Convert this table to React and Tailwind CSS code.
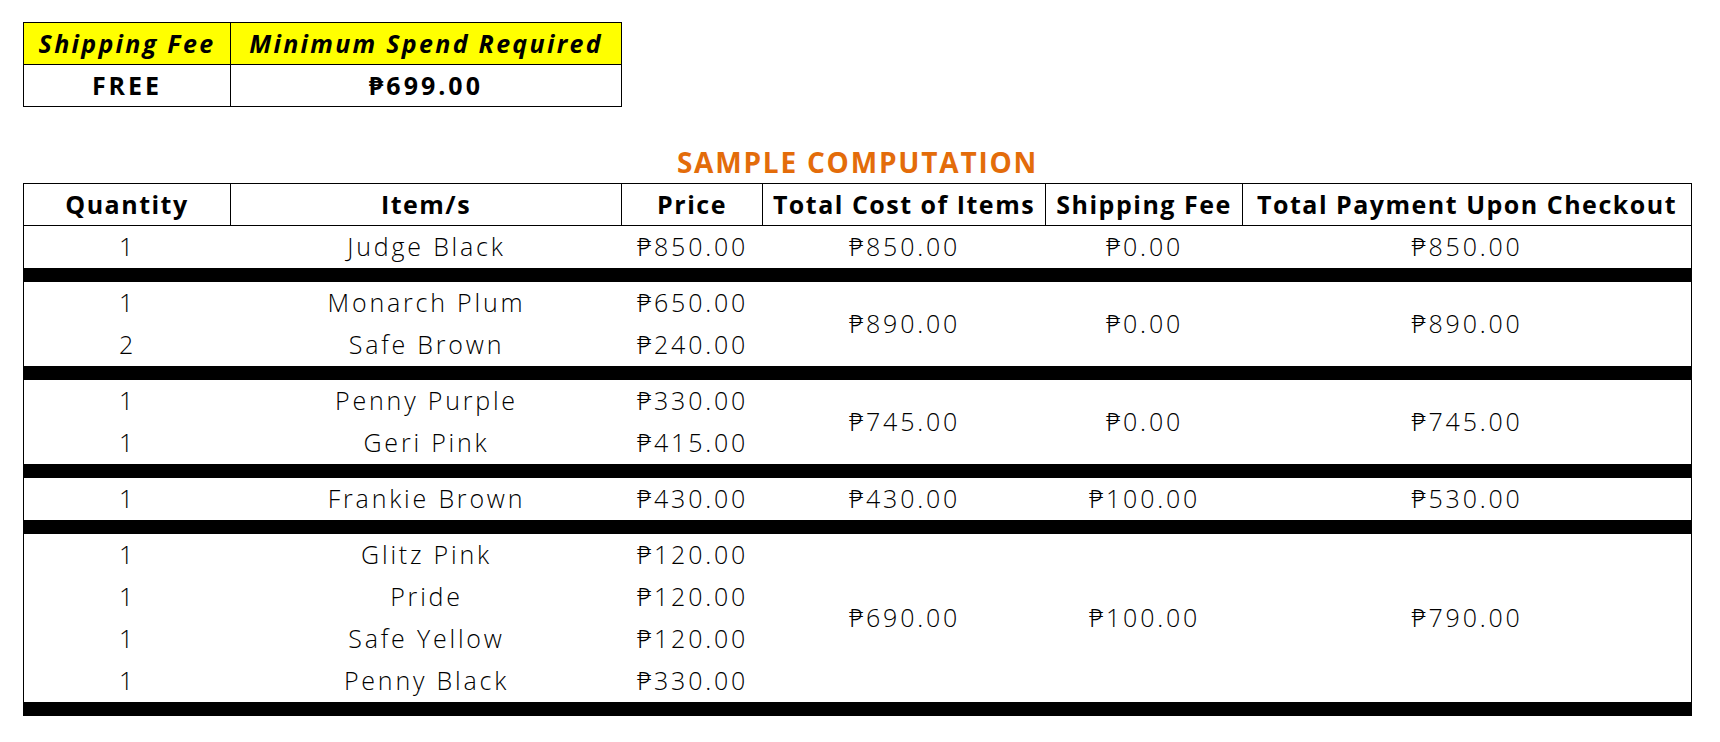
import React from "react";

const groups = [
  { items: [["1", "Judge Black", "₱850.00"]], total: "₱850.00", fee: "₱0.00", pay: "₱850.00" },
  {
    items: [
      ["1", "Monarch Plum", "₱650.00"],
      ["2", "Safe Brown", "₱240.00"],
    ],
    total: "₱890.00",
    fee: "₱0.00",
    pay: "₱890.00",
  },
  {
    items: [
      ["1", "Penny Purple", "₱330.00"],
      ["1", "Geri Pink", "₱415.00"],
    ],
    total: "₱745.00",
    fee: "₱0.00",
    pay: "₱745.00",
  },
  { items: [["1", "Frankie Brown", "₱430.00"]], total: "₱430.00", fee: "₱100.00", pay: "₱530.00" },
  {
    items: [
      ["1", "Glitz Pink", "₱120.00"],
      ["1", "Pride", "₱120.00"],
      ["1", "Safe Yellow", "₱120.00"],
      ["1", "Penny Black", "₱330.00"],
    ],
    total: "₱690.00",
    fee: "₱100.00",
    pay: "₱790.00",
  },
];

const cols = "grid grid-cols-[207px_391px_141px_283px_197px_448px]";
const heads = ["Quantity", "Item/s", "Price", "Total Cost of Items", "Shipping Fee", "Total Payment Upon Checkout"];

export default function App() {
  return (
    <div className="min-h-screen bg-white text-black pl-[23px] pt-[22px] font-['Open_Sans','Noto_Sans','DejaVu_Sans',sans-serif]">
      {/* free shipping box */}
      <div className="w-[599px] border border-black">
        <div className="grid grid-cols-[207px_1fr] bg-[#ffff00] h-[42px] border-b border-black text-[25px] font-bold italic leading-none tracking-[2.3px]">
          <div className="flex items-center justify-center border-r border-black">Shipping Fee</div>
          <div className="flex items-center justify-center">Minimum Spend Required</div>
        </div>
        <div className="grid grid-cols-[207px_1fr] h-[41px] text-[25px] font-bold leading-none tracking-[3px]">
          <div className="flex items-center justify-center border-r border-black">FREE</div>
          <div className="flex items-center justify-center">₱699.00</div>
        </div>
      </div>

      {/* sample computation */}
      <div className="w-[1669px] mt-[38px]">
        <h2 className="h-[38px] flex items-center justify-center pb-[4px] text-[28px] font-bold leading-none tracking-[1.8px] text-[#e36c0a]">
          SAMPLE COMPUTATION
        </h2>
        <div className="border-x border-black">
          <div className={`${cols} h-[43px] border-y border-black text-[25px] font-bold leading-none tracking-[1.5px]`}>
            {heads.map((h, i) => (
              <div
                key={h}
                className={`flex items-center justify-center pb-[1px] ${i < heads.length - 1 ? "border-r border-black" : ""}`}
              >
                {h}
              </div>
            ))}
          </div>

          {groups.map((g, gi) => (
            <div key={gi}>
              <div className={`${cols} text-[25px] font-light leading-none tracking-[2.8px]`}>
                {g.items.map((it, ri) => (
                  <React.Fragment key={ri}>
                    <div className="h-[42px] flex items-center justify-center pb-[2px]">{it[0]}</div>
                    <div className="h-[42px] flex items-center justify-center pb-[2px]">{it[1]}</div>
                    <div className="h-[42px] flex items-center justify-center pb-[2px]">{it[2]}</div>
                    {ri === 0 && (
                      <>
                        <div
                          className="flex items-center justify-center pb-[2px]"
                          style={{ gridRow: `span ${g.items.length}` }}
                        >
                          {g.total}
                        </div>
                        <div
                          className="flex items-center justify-center pb-[2px]"
                          style={{ gridRow: `span ${g.items.length}` }}
                        >
                          {g.fee}
                        </div>
                        <div
                          className="flex items-center justify-center pb-[2px]"
                          style={{ gridRow: `span ${g.items.length}` }}
                        >
                          {g.pay}
                        </div>
                      </>
                    )}
                  </React.Fragment>
                ))}
              </div>
              <div className="h-[14px] bg-black -mx-px" />
            </div>
          ))}
        </div>
      </div>
    </div>
  );
}
